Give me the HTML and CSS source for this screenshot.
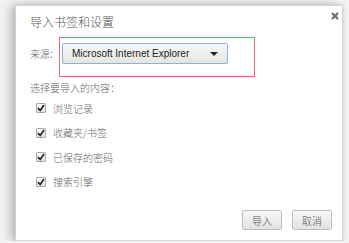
FILE: index.html
```html
<!DOCTYPE html>
<html lang="zh-CN">
<head>
    <meta charset="UTF-8">
    <title>导入书签和设置</title>
    <link rel="stylesheet" href="styles.css">
</head>
<body>
    <div class="dialog">
        <div class="dialog-title">导入书签和设置</div>
        <span class="close-btn">
            <svg width="8" height="8" viewBox="0 0 8 8"><path d="M1 1L7 7M7 1L1 7" stroke="#6b6b6b" stroke-width="2"/></svg>
        </span>
        <div class="source-row">
            <span class="label">来源：</span>
            <div class="highlight">
                <div class="select">
                    <span>Microsoft Internet Explorer</span>
                    <span class="arrow"></span>
                </div>
            </div>
        </div>
        <div class="section-label">选择要导入的内容：</div>
        <ul class="options">
            <li><span class="checkbox"><svg width="8" height="8" viewBox="0 0 8 8"><path d="M1 4.2L3.2 6.5L7 1" stroke="#222" stroke-width="1.7" fill="none"/></svg></span>浏览记录</li>
            <li><span class="checkbox"><svg width="8" height="8" viewBox="0 0 8 8"><path d="M1 4.2L3.2 6.5L7 1" stroke="#222" stroke-width="1.7" fill="none"/></svg></span>收藏夹/书签</li>
            <li><span class="checkbox"><svg width="8" height="8" viewBox="0 0 8 8"><path d="M1 4.2L3.2 6.5L7 1" stroke="#222" stroke-width="1.7" fill="none"/></svg></span>已保存的密码</li>
            <li><span class="checkbox"><svg width="8" height="8" viewBox="0 0 8 8"><path d="M1 4.2L3.2 6.5L7 1" stroke="#222" stroke-width="1.7" fill="none"/></svg></span>搜索引擎</li>
        </ul>
        <div class="buttons">
            <button class="btn">导入</button>
            <button class="btn">取消</button>
        </div>
    </div>
</body>
</html>
```

FILE: styles.css
```css
body{
    margin: 0;
    padding: 0;
    background-color: #f3f3f3;
    font-family: "Noto Sans CJK SC", "Liberation Sans", sans-serif;
    font-weight: 300;
    color: #666;
    overflow: hidden;
}
.dialog{
    position: relative;
    box-sizing: border-box;
    width: 328px;
    height: 236px;
    margin: 5px 0 0 15px;
    padding: 8px 10px 10px 14px;
    background-color: #fff;
    border: 1px solid #d4d4d4;
    box-shadow: -5px 0 10px rgba(0, 0, 0, 0.22), 0 0 4px rgba(0, 0, 0, 0.12);
    display: flex;
    flex-direction: column;
}
.dialog-title{
    font-size: 12px;
    line-height: 16px;
    color: #555;
}
.close-btn{
    position: absolute;
    top: 6px;
    right: 3px;
    width: 8px;
    height: 8px;
    line-height: 0;
}
.source-row{
    display: flex;
    align-items: flex-start;
    margin-top: 7px;
}
.label{
    flex: 0 0 29px;
    white-space: nowrap;
    font-size: 10px;
    line-height: 14px;
    margin-top: 10px;
    letter-spacing: -0.5px;
}
.highlight{
    box-sizing: border-box;
    width: 196px;
    height: 40px;
    border: 1px solid #e36a6e;
    padding: 5px 0 0 2px;
}
.select{
    box-sizing: border-box;
    width: 166px;
    height: 21px;
    border: 1px solid #8fb0dc;
    border-radius: 2px;
    background: linear-gradient(#f8f8f8, #e4e4e4);
    display: flex;
    align-items: center;
    justify-content: space-between;
    padding: 0 9px 0 9px;
    font-family: "Liberation Sans", sans-serif;
    font-weight: normal;
    font-size: 10px;
    color: #222;
}
.arrow{
    width: 0;
    height: 0;
    border-left: 4px solid transparent;
    border-right: 4px solid transparent;
    border-top: 4px solid #222;
}
.section-label{
    font-size: 10px;
    line-height: 14px;
    margin-top: 4px;
}
.options{
    list-style: none;
    margin: 1px 0 0 0;
    padding: 0;
}
.options li{
    display: flex;
    align-items: center;
    height: 24.5px;
    font-size: 10px;
    padding-left: 6px;
}
.checkbox{
    box-sizing: border-box;
    width: 10px;
    height: 10px;
    border: 1px solid #a9a9a9;
    border-radius: 1px;
    background: linear-gradient(#fff, #e2e2e2);
    display: flex;
    align-items: center;
    justify-content: center;
    margin-right: 7px;
}
.buttons{
    margin-top: auto;
    display: flex;
    justify-content: flex-end;
    gap: 10px;
}
.btn{
    box-sizing: border-box;
    width: 40px;
    height: 20px;
    padding: 0;
    border: 1px solid #bdbdbd;
    border-radius: 2px;
    background: linear-gradient(#f7f7f7, #e2e2e2);
    font-family: "Noto Sans CJK SC", sans-serif;
    font-weight: 300;
    font-size: 10px;
    color: #555;
}
```
